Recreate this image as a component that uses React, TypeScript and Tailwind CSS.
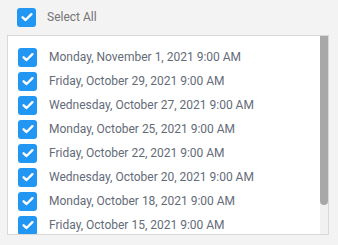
import React from "react";

const dates = [
  "Monday, November 1, 2021 9:00 AM",
  "Friday, October 29, 2021 9:00 AM",
  "Wednesday, October 27, 2021 9:00 AM",
  "Monday, October 25, 2021 9:00 AM",
  "Friday, October 22, 2021 9:00 AM",
  "Wednesday, October 20, 2021 9:00 AM",
  "Monday, October 18, 2021 9:00 AM",
  "Friday, October 15, 2021 9:00 AM",
];

function Check() {
  return (
    <div className="w-[19px] h-[19px] shrink-0 rounded-[3px] bg-[#2196f3] flex items-center justify-center">
      <svg width="12" height="10" viewBox="0 0 12 10">
        <path d="M1.6 5.3 L4.6 8 L10.4 2.2" fill="none" stroke="white" strokeWidth="2.4" strokeLinecap="round" strokeLinejoin="round" />
      </svg>
    </div>
  );
}

export default function App() {
  return (
    <div className="w-[338px] h-[245px] bg-[#f3f3f3] overflow-hidden" style={{ fontFamily: "Roboto, sans-serif" }}>
      <div className="flex items-center h-[35px] pl-[17px] pb-[1px]">
        <Check />
        <span className="ml-[11px] text-[12px] text-[#747474]">Select All</span>
      </div>
      <div className="ml-[7px] w-[322px] h-[200px] border border-[#d8d8d8] bg-white flex overflow-hidden">
        <div className="flex-1 pt-[9px] pl-[10px] flex flex-col">
          {dates.map((d) => (
            <div key={d} className="h-6 flex items-center shrink-0">
              <Check />
              <span className="ml-[12px] text-[12px] text-[#646b78] whitespace-nowrap">{d}</span>
            </div>
          ))}
        </div>
        <div className="w-[8px] bg-[#f1f1f1] flex flex-col">
          <div className="h-[169px] bg-[#a8a8a8] rounded-b-[4px]" />
        </div>
      </div>
    </div>
  );
}
